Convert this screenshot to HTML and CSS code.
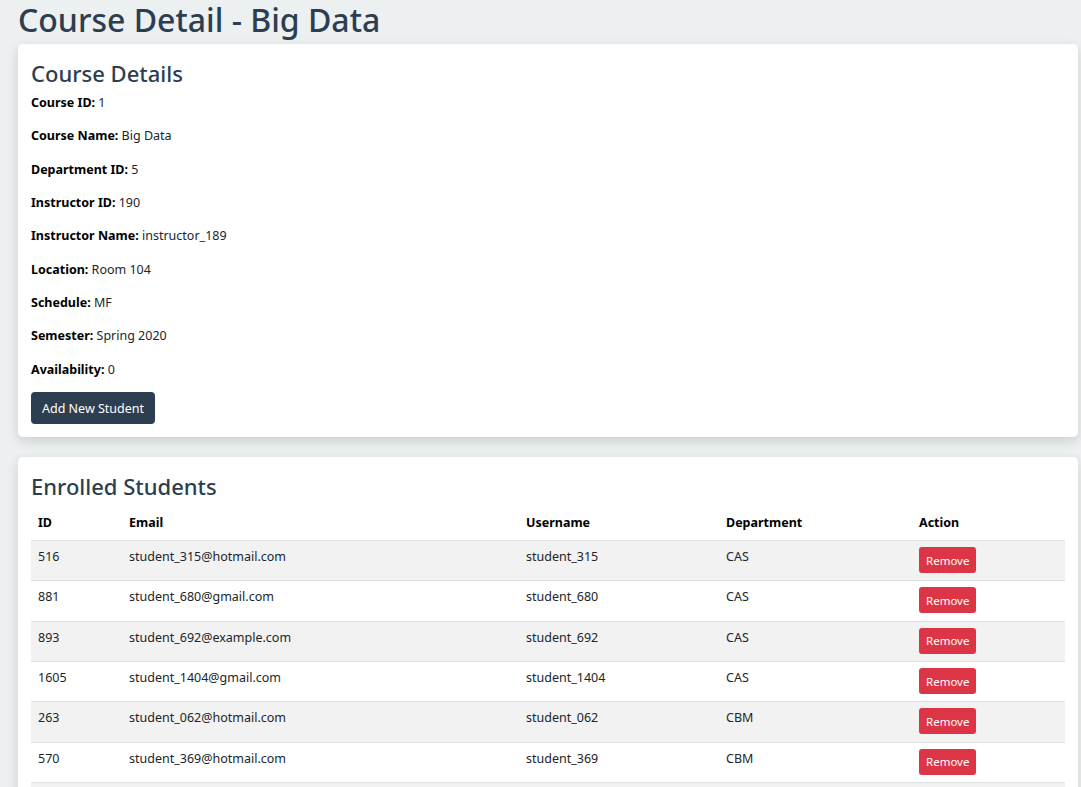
FILE: index.html
```html
<!DOCTYPE html>
<html lang="en">
<head>
<meta charset="utf-8">
<title>Course Detail - Big Data</title>
<link rel="stylesheet" href="styles.css">
</head>
<body>
<div class="page">
  <h1 class="title">Course Detail - Big Data</h1>
  <section class="card">
    <h2 class="card-title">Course Details</h2>
    <p class="field"><strong>Course ID:</strong> 1</p>
    <p class="field"><strong>Course Name:</strong> Big Data</p>
    <p class="field"><strong>Department ID:</strong> 5</p>
    <p class="field"><strong>Instructor ID:</strong> 190</p>
    <p class="field"><strong>Instructor Name:</strong> instructor_189</p>
    <p class="field"><strong>Location:</strong> Room 104</p>
    <p class="field"><strong>Schedule:</strong> MF</p>
    <p class="field"><strong>Semester:</strong> Spring 2020</p>
    <p class="field"><strong>Availability:</strong> 0</p>
    <button class="btn-dark" type="button">Add New Student</button>
  </section>
  <section class="card">
    <h2 class="card-title">Enrolled Students</h2>
    <table class="students">
      <colgroup>
        <col class="c-id"><col class="c-email"><col class="c-user"><col class="c-dept"><col class="c-act">
      </colgroup>
      <thead>
        <tr><th>ID</th><th>Email</th><th>Username</th><th>Department</th><th>Action</th></tr>
      </thead>
      <tbody>
        <tr><td>516</td><td>student_315@hotmail.com</td><td>student_315</td><td>CAS</td><td><button class="btn-remove" type="button">Remove</button></td></tr>
        <tr><td>881</td><td>student_680@gmail.com</td><td>student_680</td><td>CAS</td><td><button class="btn-remove" type="button">Remove</button></td></tr>
        <tr><td>893</td><td>student_692@example.com</td><td>student_692</td><td>CAS</td><td><button class="btn-remove" type="button">Remove</button></td></tr>
        <tr><td>1605</td><td>student_1404@gmail.com</td><td>student_1404</td><td>CAS</td><td><button class="btn-remove" type="button">Remove</button></td></tr>
        <tr><td>263</td><td>student_062@hotmail.com</td><td>student_062</td><td>CBM</td><td><button class="btn-remove" type="button">Remove</button></td></tr>
        <tr><td>570</td><td>student_369@hotmail.com</td><td>student_369</td><td>CBM</td><td><button class="btn-remove" type="button">Remove</button></td></tr>
        <tr><td>712</td><td>student_511@gmail.com</td><td>student_511</td><td>CBM</td><td><button class="btn-remove" type="button">Remove</button></td></tr>
      </tbody>
    </table>
  </section>
</div>
</body>
</html>
```

FILE: styles.css
```css
* { box-sizing: border-box; }
html, body {
  margin: 0;
  background: #ecf0f1;
  font-family: "Noto Sans", "Open Sans", sans-serif;
  color: #212529;
}
.page {
  padding: 0 3px 20px 18px;
}
.title {
  margin: 0 0 4px;
  font-size: 32px;
  line-height: 40px;
  font-weight: 500;
  color: #2c3e50;
}
.card {
  background: #fff;
  border-radius: 5px;
  box-shadow: 0 4px 12px rgba(0, 0, 0, 0.14);
  padding: 13px 13px 13px;
  margin-bottom: 20px;
}
.card-title {
  margin: 2px 0 6px;
  font-size: 22px;
  line-height: 28px;
  font-weight: 500;
  color: #2c3e50;
}
.field {
  margin: 0 0 13.33px;
  font-size: 12.5px;
  line-height: 20px;
  color: #212529;
}
.field:last-of-type { margin-bottom: 12.5px; }
.field strong { color: #000; font-weight: 700; }
.btn-dark {
  display: block;
  height: 32px;
  padding: 0 11px;
  border: 0;
  border-radius: 4px;
  background: #2c3e50;
  color: #fff;
  font-family: inherit;
  font-size: 12.5px;
}
.students {
  width: 100%;
  border-collapse: collapse;
  font-size: 12.5px;
  line-height: 20px;
}
.c-id { width: 91px; }
.c-email { width: 397px; }
.c-user { width: 200px; }
.c-dept { width: 193px; }
.students th {
  text-align: left;
  font-weight: 700;
  color: #000;
  padding: 7px 7px 7px;
  border-bottom: 1px solid #dee2e6;
}
.students td {
  padding: 6px 7px 7.33px;
  vertical-align: top;
  border-bottom: 1px solid #dee2e6;
}
.students tbody tr:nth-child(odd) { background: #f2f2f2; }
.btn-remove {
  display: block;
  height: 26px;
  padding: 0 7px;
  border: 0;
  border-radius: 3px;
  background: #dc3545;
  color: #fff;
  font-family: inherit;
  font-size: 11.5px;
}
```
